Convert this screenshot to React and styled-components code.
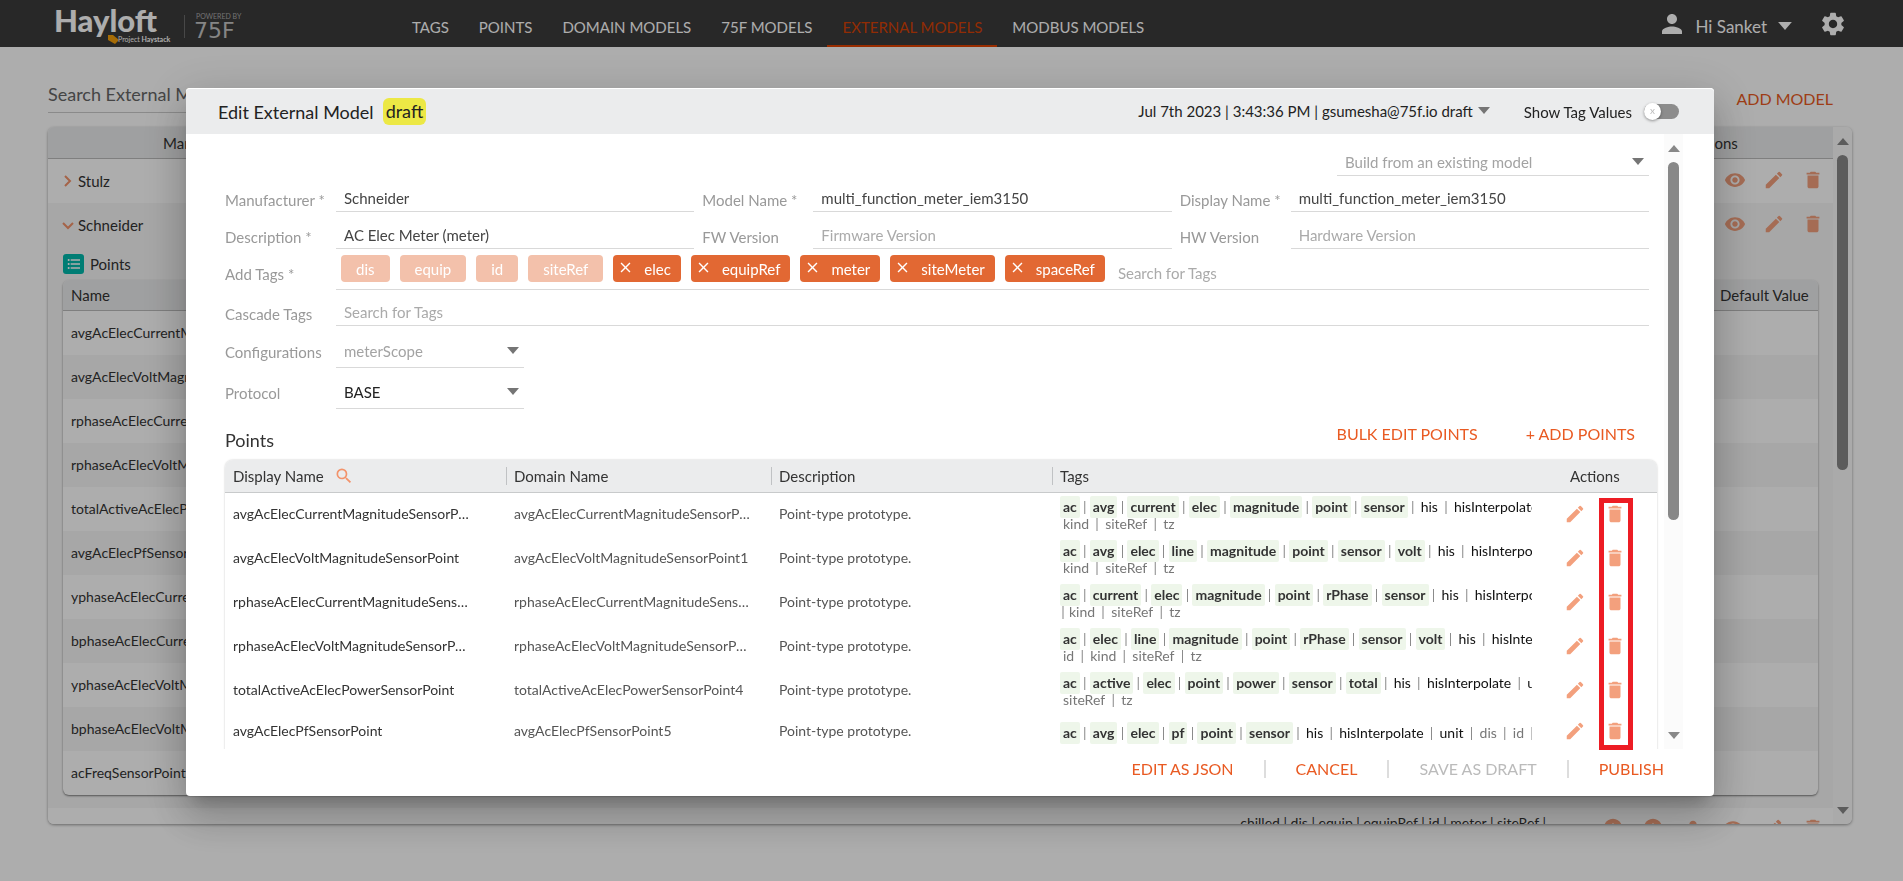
import React from "react";
import styled, { createGlobalStyle, css } from "styled-components";
import {
  MdClose,
  MdDelete,
  MdEdit,
  MdFormatListBulleted,
  MdInfo,
  MdPerson,
  MdSearch,
  MdSettings,
  MdVisibility,
} from "react-icons/md";

const navItems = [
  "TAGS",
  "POINTS",
  "DOMAIN MODELS",
  "75F MODELS",
  "EXTERNAL MODELS",
  "MODBUS MODELS",
];

const modelPoints = [
  "avgAcElecCurrentMagnitudeSensorPoint",
  "avgAcElecVoltMagnitudeSensorPoint",
  "rphaseAcElecCurrentMagnitudeSensorPoint",
  "rphaseAcElecVoltMagnitudeSensorPoint",
  "totalActiveAcElecPowerSensorPoint",
  "avgAcElecPfSensorPoint",
  "yphaseAcElecCurrentMagnitudeSensorPoint",
  "bphaseAcElecCurrentMagnitudeSensorPoint",
  "yphaseAcElecVoltMagnitudeSensorPoint",
  "bphaseAcElecVoltMagnitudeSensorPoint",
  "acFreqSensorPoint",
];

const fixedTags = ["dis", "equip", "id", "siteRef"];
const addedTags = ["elec", "equipRef", "meter", "siteMeter", "spaceRef"];

const points = [
  {
    name: "avgAcElecCurrentMagnitudeSensorPoint",
    marked: ["ac", "avg", "current", "elec", "magnitude", "point", "sensor"],
    plain: ["his", "hisInterpolate", "unit"],
    second: ["kind", "siteRef", "tz"],
  },
  {
    name: "avgAcElecVoltMagnitudeSensorPoint",
    marked: ["ac", "avg", "elec", "line", "magnitude", "point", "sensor", "volt"],
    plain: ["his", "hisInterpolate", "unit"],
    second: ["kind", "siteRef", "tz"],
  },
  {
    name: "rphaseAcElecCurrentMagnitudeSensorPoint",
    marked: ["ac", "current", "elec", "magnitude", "point", "rPhase", "sensor"],
    plain: ["his", "hisInterpolate", "unit"],
    second: ["kind", "siteRef", "tz"],
    continued: true,
  },
  {
    name: "rphaseAcElecVoltMagnitudeSensorPoint",
    marked: ["ac", "elec", "line", "magnitude", "point", "rPhase", "sensor", "volt"],
    plain: ["his", "hisInterpolate", "unit"],
    second: ["id", "kind", "siteRef", "tz"],
  },
  {
    name: "totalActiveAcElecPowerSensorPoint",
    marked: ["ac", "active", "elec", "point", "power", "sensor", "total"],
    plain: ["his", "hisInterpolate", "unit"],
    second: ["siteRef", "tz"],
  },
  {
    name: "avgAcElecPfSensorPoint",
    marked: ["ac", "avg", "elec", "pf", "point", "sensor"],
    plain: ["his", "hisInterpolate", "unit"],
    muted: ["dis", "id", "kind"],
    second: [],
  },
];

const Logo = () => (
  <LogoSvg width="190" height="47" viewBox="0 0 190 47" role="img" aria-label="Hayloft powered by 75F">
    <text x="-2" y="32" fontSize="31" fontWeight="900" fill="#fff">
      Hayloft
    </text>
    <path d="M52 35h5l6 5-4 4-7-4z" fill="#f5a009" />
    <text x="62" y="42" fontSize="7" fill="#fff">
      Project <tspan fontWeight="700">Haystack</tspan>
    </text>
    <path d="M128.500 15v23" stroke="#6a6a6a" />
    <text x="140" y="19" fontSize="7" fill="#aaa">
      POWERED BY
    </text>
    <text x="138" y="38" fontSize="22" fill="#c4c4c4" fontFamily="DejaVu Sans, sans-serif">
      75F
    </text>
  </LogoSvg>
);

const Caret = ({ size = 12, color = "#757575", up }) => (
  <CaretSvg width={size} height={size / 2 + 1} viewBox="0 0 12 7">
    <path d={up ? "M0 7L6 0l6 7z" : "M0 0h12L6 7z"} fill={color} />
  </CaretSvg>
);

const Scrollbar = ({ size }) => (
  <ScrollTrack>
    <Caret up color="#888" />
    <ScrollRail>
      <ScrollThumb $size={size} />
    </ScrollRail>
    <Caret color="#888" />
  </ScrollTrack>
);

const TagList = ({ items, marked, muted }) =>
  items.map((tag, index) => (
    <React.Fragment key={tag}>
      {index > 0 && <Bar>|</Bar>}
      <Tag $marked={marked} $muted={muted}>
        {tag}
      </Tag>
    </React.Fragment>
  ));

const Field = ({ id, label, value, placeholder }) => (
  <FieldBox>
    <Label htmlFor={id}>{label}</Label>
    <TextInput id={id} defaultValue={value} placeholder={placeholder} />
  </FieldBox>
);

const ModelsPage = () => (
  <Main>
    <Toolbar>
      <SearchInput aria-label="Search External Models" placeholder="Search External Models" />
      <Pager>
        <span>Results per page</span>
        <PageSize>20</PageSize>
        <span>1 - 20 of 151</span>
      </Pager>
      <LinkButton>ADD MODEL</LinkButton>
    </Toolbar>
    <Panel>
      <PanelContent>
        <ModelTable>
          <thead>
            <tr>
              <th>Manufacturer</th>
              <th>Model</th>
              <th>Tags</th>
              <th>Actions</th>
            </tr>
          </thead>
          <tbody>
            {["Stulz", "Schneider"].map((name, index) => (
              <ModelRow key={name} $shaded={index === 1}>
                <td colSpan="3">
                  <Expander>
                    <svg width="14" height="14" viewBox="0 0 14 14" fill="none" stroke="#f3936b" strokeWidth="2">
                      <path d={index === 1 ? "M1 5l5 5 5-5" : "M3 2l5 5-5 5"} />
                    </svg>
                    {name}
                  </Expander>
                </td>
                <td>
                  <RowActions $gap={17}>
                    <IconButton aria-label="View"><MdVisibility size={22} /></IconButton>
                    <IconButton aria-label="Edit"><MdEdit size={22} /></IconButton>
                    <IconButton aria-label="Delete"><MdDelete size={22} /></IconButton>
                  </RowActions>
                </td>
              </ModelRow>
            ))}
          </tbody>
        </ModelTable>
        <Nested>
          <NestedTitle>
            <ListBadge>
              <MdFormatListBulleted size={16} />
            </ListBadge>
            Points
          </NestedTitle>
          <NestedTable>
            <thead>
              <tr>
                <th>Name</th>
                <th>Default Value</th>
              </tr>
            </thead>
            <tbody>
              {modelPoints.map((name) => (
                <tr key={name}>
                  <td>{name}</td>
                  <td />
                </tr>
              ))}
            </tbody>
          </NestedTable>
        </Nested>
        <NextModel>
          <span>chilled | dis | equip | equipRef | id | meter | siteRef |</span>
          <RowActions $gap={18}>
            <IconButton aria-label="Info"><MdInfo size={22} /></IconButton>
            <IconButton aria-label="Details"><MdInfo size={22} /></IconButton>
            <IconButton aria-label="User"><MdPerson size={22} /></IconButton>
            <IconButton aria-label="View"><MdVisibility size={22} /></IconButton>
            <IconButton aria-label="Edit"><MdEdit size={22} /></IconButton>
            <IconButton aria-label="Delete"><MdDelete size={22} /></IconButton>
          </RowActions>
        </NextModel>
      </PanelContent>
      <Scrollbar size={49} />
    </Panel>
  </Main>
);

const EditDialog = () => (
  <Dialog role="dialog" aria-label="Edit External Model">
    <DialogHeader>
      <Title>Edit External Model</Title>
      <DraftBadge>draft</DraftBadge>
      <VersionButton>
        Jul 7th 2023 | 3:43:36 PM | gsumesha@75f.io draft
        <Caret />
      </VersionButton>
      <SwitchLabel>
        Show Tag Values
        <SwitchInput type="checkbox" />
        <SwitchTrack>
          <SwitchKnob>x</SwitchKnob>
        </SwitchTrack>
      </SwitchLabel>
    </DialogHeader>

    <DialogBody>
      <DialogContent>
        <Form>
          <BuildRow>
            <SelectBox $width={312} $height={28}>
              <Select aria-label="Build from an existing model" $muted>
                <option>Build from an existing model</option>
              </Select>
              <Caret />
            </SelectBox>
          </BuildRow>
          <FieldRow $height={36}>
            <Field id="manufacturer" label="Manufacturer *" value="Schneider" />
            <Field id="modelName" label="Model Name *" value="multi_function_meter_iem3150" />
            <Field id="displayName" label="Display Name *" value="multi_function_meter_iem3150" />
          </FieldRow>
          <FieldRow $height={37}>
            <Field id="description" label="Description *" value="AC Elec Meter (meter)" />
            <Field id="firmware" label="FW Version" placeholder="Firmware Version" />
            <Field id="hardware" label="HW Version" placeholder="Hardware Version" />
          </FieldRow>
          <FormRow $height={41}>
            <Label htmlFor="tags" $raised>Add Tags *</Label>
            <ChipField>
              {fixedTags.map((tag) => (
                <Chip key={tag} $fixed>{tag}</Chip>
              ))}
              {addedTags.map((tag) => (
                <Chip key={tag}>
                  <ChipRemove aria-label={`Remove ${tag}`}>
                    <MdClose size={17} />
                  </ChipRemove>
                  {tag}
                </Chip>
              ))}
              <ChipInput id="tags" placeholder="Search for Tags" />
            </ChipField>
          </FormRow>
          <FormRow $height={36}>
            <Label htmlFor="cascade">Cascade Tags</Label>
            <TextInput id="cascade" placeholder="Search for Tags" />
          </FormRow>
          <FormRow $height={42}>
            <Label htmlFor="config" $raised>Configurations</Label>
            <SelectBox $width={188} $height={34}>
              <Select id="config" $muted>
                <option>meterScope</option>
              </Select>
              <Caret />
            </SelectBox>
          </FormRow>
          <FormRow $height={41}>
            <Label htmlFor="protocol" $raised>Protocol</Label>
            <SelectBox $width={188} $height={34}>
              <Select id="protocol">
                <option>BASE</option>
              </Select>
              <Caret />
            </SelectBox>
          </FormRow>
        </Form>

        <PointsBar>
          <PointsTitle>Points</PointsTitle>
          <LinkButton>BULK EDIT POINTS</LinkButton>
          <LinkButton>+ ADD POINTS</LinkButton>
        </PointsBar>

        <PointsTable>
          <colgroup>
            <NameCol />
            <DomainCol />
            <NameCol />
            <col />
            <ActionsCol />
          </colgroup>
          <thead>
            <tr>
              <HeadCell>
                <HeadText>
                  Display Name
                  <MdSearch size={20} color="#f3936b" />
                </HeadText>
              </HeadCell>
              <HeadCell $divided><HeadText>Domain Name</HeadText></HeadCell>
              <HeadCell $divided><HeadText>Description</HeadText></HeadCell>
              <HeadCell $divided><HeadText>Tags</HeadText></HeadCell>
              <HeadCell><HeadText $indent>Actions</HeadText></HeadCell>
            </tr>
          </thead>
          <tbody>
            {points.map((point, index) => (
              <tr key={point.name}>
                <Cell $dark><Ellipsis>{point.name}</Ellipsis></Cell>
                <Cell><Ellipsis>{`${point.name}${index}`}</Ellipsis></Cell>
                <Cell>Point-type prototype.</Cell>
                <TagCell>
                  <TagLine>
                    <TagList items={point.marked} marked />
                    <Bar>|</Bar>
                    <TagList items={point.plain} />
                    {point.muted && <Bar>|</Bar>}
                    {point.muted && <TagList items={point.muted} muted />}
                  </TagLine>
                  {point.second.length > 0 && (
                    <SecondLine>
                      {point.continued && <Bar $first>|</Bar>}
                      <TagList items={point.second} muted />
                    </SecondLine>
                  )}
                </TagCell>
                <td>
                  <PointActions $gap={18}>
                    <IconButton aria-label="Edit point"><MdEdit size={22} /></IconButton>
                    <IconButton aria-label="Delete point"><MdDelete size={22} /></IconButton>
                  </PointActions>
                </td>
              </tr>
            ))}
          </tbody>
        </PointsTable>
      </DialogContent>
      <Scrollbar size={64} />
    </DialogBody>

    <DialogFooter>
      <FooterButton>EDIT AS JSON</FooterButton>
      <FooterButton>CANCEL</FooterButton>
      <FooterButton disabled>SAVE AS DRAFT</FooterButton>
      <FooterButton>PUBLISH</FooterButton>
    </DialogFooter>
    <Highlight />
  </Dialog>
);

export default function App() {
  return (
    <>
      <GlobalStyle />
      <Page>
        <Header>
          <Logo />
          <Nav>
            {navItems.map((item) => (
              <NavLink key={item} href="#" $active={item === "EXTERNAL MODELS"}>
                {item}
              </NavLink>
            ))}
          </Nav>
          <UserMenu>
            <MdPerson size={30} />
            Hi Sanket
            <Caret size={14} color="#fff" />
          </UserMenu>
          <SettingsButton aria-label="Settings">
            <MdSettings size={28} />
          </SettingsButton>
        </Header>
        <ModelsPage />
      </Page>
      <Backdrop>
        <EditDialog />
      </Backdrop>
    </>
  );
}

const GlobalStyle = createGlobalStyle`
  * {
    box-sizing: border-box;
  }

  body {
    margin: 0;
    background: #fff;
    color: #333;
    font-family: Lato, sans-serif;
    font-size: 15px;
  }

  button,
  input,
  select {
    font: inherit;
    color: inherit;
    border: 0;
    padding: 0;
    margin: 0;
    background: none;
    outline: none;
  }

  table {
    border-spacing: 0;
    table-layout: fixed;
    width: 100%;
  }

  th,
  td {
    padding: 0;
    text-align: left;
    font-weight: 400;
  }
`;

const Page = styled.div`
  display: flex;
  flex-direction: column;
  height: 100vh;
  overflow: hidden;
`;

const Header = styled.header`
  display: flex;
  align-items: stretch;
  flex: none;
  height: 47px;
  padding: 0 56px;
  background: #3b3b3b;
  color: #fff;
`;

const LogoSvg = styled.svg`
  flex: none;
  margin-right: 151px;
  overflow: visible;
`;

const Nav = styled.nav`
  display: flex;
  flex: 1;
`;

const NavLink = styled.a`
  padding: 9px 15px 0;
  border-bottom: 2px solid ${({ $active }) => ($active ? "#e24301" : "transparent")};
  line-height: 36px;
  color: ${({ $active }) => ($active ? "#d64206" : "#fff")};
  text-decoration: none;
  white-space: nowrap;
`;

const UserMenu = styled.button`
  display: flex;
  align-items: center;
  gap: 11px;
  padding-top: 5px;
  font-size: 17px;

  > svg:first-child {
    margin: 0 -2px 4px 0;
  }
`;

const SettingsButton = styled.button`
  display: flex;
  align-items: center;
  margin-left: 27px;
`;

const CaretSvg = styled.svg`
  flex: none;
  pointer-events: none;
`;

const Main = styled.main`
  display: flex;
  flex-direction: column;
  flex: 1;
  min-height: 0;
  padding: 31px 51px 57px 48px;
`;

const Toolbar = styled.div`
  display: flex;
  align-items: flex-start;
  flex: none;
  height: 49px;
  padding-right: 19px;
`;

const SearchInput = styled.input`
  width: 340px;
  height: 35px;
  padding-bottom: 2px;
  border-bottom: 1px solid #ccc;
  font-size: 18px;

  &::placeholder {
    color: #666;
    opacity: 1;
  }
`;

const Pager = styled.div`
  display: flex;
  flex: 1;
  gap: 22px;
  padding: 6px 0 0 29px;

  span:last-child {
    margin-left: 78px;
  }
`;

const PageSize = styled.span`
  color: #e24301;
`;

const LinkButton = styled.button`
  font-size: 16px;
  line-height: 24px;
  color: #e95a22;
  white-space: nowrap;

  ${Toolbar} & {
    margin-top: 9px;
  }
`;

const Panel = styled.section`
  display: flex;
  flex: 1;
  min-height: 0;
  border-radius: 6px;
  box-shadow: 0 1px 3px rgba(0, 0, 0, 0.4);
  overflow: hidden;
`;

const PanelContent = styled.div`
  flex: 1;
  min-width: 0;
  background: #f6f6f6;
`;

const ModelTable = styled.table`
  th {
    height: 32px;
    border-bottom: 1px solid #bbb;
    background: #ebeced;
    text-align: center;
  }

  th:first-child {
    width: 320px;
  }

  th:last-child {
    width: 240px;
  }
`;

const ModelRow = styled.tr`
  height: 44px;
  background: ${({ $shaded }) => ($shaded ? "#f6f6f6" : "#fff")};
`;

const Expander = styled.button`
  display: flex;
  align-items: center;
  gap: 2px;
  padding-left: 14px;
`;

const RowActions = styled.div`
  display: flex;
  justify-content: flex-end;
  gap: ${({ $gap }) => $gap}px;
  padding-right: 9px;

  ${ModelRow} & {
    padding-bottom: 3px;
  }
`;

const PointActions = styled(RowActions)`
  padding: 0 31px 2px 0;
`;

const IconButton = styled.button`
  display: flex;
  color: #f3a07d;
`;

const Nested = styled.div`
  padding: 0 15px 13px;
`;

const NestedTitle = styled.div`
  display: flex;
  align-items: center;
  gap: 6px;
  height: 33px;
`;

const ListBadge = styled.span`
  display: grid;
  place-items: center;
  width: 21px;
  height: 20px;
  border-radius: 3px;
  background: #00b8ac;
  color: #fff;
`;

const NestedTable = styled.table`
  border-radius: 6px;
  box-shadow: 0 1px 2px rgba(0, 0, 0, 0.5);
  background: #fff;
  overflow: hidden;
  font-size: 14px;

  th {
    height: 31px;
    border-bottom: 1px solid #bbb;
    background: #ebeced;
    font-size: 15px;
  }

  th,
  td {
    padding-left: 8px;
  }

  th:last-child {
    width: 106px;
  }

  td {
    height: 44px;
    padding-bottom: 2px;
  }

  tbody tr:nth-child(even) {
    background: #f6f6f6;
  }
`;

const NextModel = styled.div`
  display: flex;
  justify-content: flex-end;
  gap: 56px;
  padding-top: 5px;
  background: #fff;
  font-size: 14px;
  line-height: 20px;

  ${RowActions} {
    padding-top: 4px;
  }
`;

const ScrollTrack = styled.div`
  display: flex;
  flex: none;
  flex-direction: column;
  align-items: center;
  gap: 10px;
  width: 19px;
  padding: 11px 0 10px;
  background: #fbfbfb;
`;

const ScrollRail = styled.div`
  flex: 1;
`;

const ScrollThumb = styled.div`
  width: 11px;
  height: ${({ $size }) => $size}%;
  border-radius: 6px;
  background: #888;
`;

const Backdrop = styled.div`
  position: fixed;
  inset: 0;
  display: flex;
  padding: 88px 189px 85px 186px;
  background: rgba(0, 0, 0, 0.32);
`;

const Dialog = styled.section`
  position: relative;
  display: flex;
  flex: 1;
  flex-direction: column;
  min-width: 0;
  border-radius: 4px;
  background: #fff;
  box-shadow: 0 11px 15px -7px rgba(0, 0, 0, 0.2), 0 24px 38px 3px rgba(0, 0, 0, 0.14),
    0 9px 46px 8px rgba(0, 0, 0, 0.12);
`;

const DialogHeader = styled.header`
  display: flex;
  align-items: center;
  flex: none;
  height: 46px;
  padding: 0 35px 0 32px;
  border-top: 1px solid #fff;
  border-radius: 4px 4px 0 0;
  background: #ebeced;
  color: #222;
`;

const Title = styled.h1`
  margin: 0 9px 0 0;
  font-size: 18px;
  font-weight: 400;
`;

const DraftBadge = styled.span`
  padding: 0 3px;
  border-radius: 6px;
  background: #ece845;
  font-size: 18px;
  line-height: 27px;
`;

const VersionButton = styled.button`
  display: flex;
  align-items: center;
  gap: 5px;
  margin: 0 0 2px auto;
`;

const SwitchLabel = styled.label`
  display: flex;
  align-items: center;
  margin-left: 34px;
`;

const SwitchInput = styled.input`
  width: 0;
  height: 0;
  appearance: none;
`;

const SwitchTrack = styled.span`
  display: flex;
  align-items: center;
  width: 35px;
  height: 15px;
  margin-left: 12px;
  border-radius: 8px;
  background: #8c8c8c;
`;

const SwitchKnob = styled.span`
  width: 17px;
  height: 17px;
  border-radius: 50%;
  background: #fff;
  box-shadow: 0 1px 3px rgba(0, 0, 0, 0.4);
  color: #bbb;
  font-size: 10px;
  line-height: 15px;
  text-align: center;
`;

const DialogBody = styled.div`
  display: flex;
  flex: 1;
  min-height: 0;
  padding: 0 31px 0 39px;
  overflow: hidden;
`;

const DialogContent = styled.div`
  flex: 1;
  min-width: 0;
  padding-right: 7px;
`;

const Form = styled.form`
  padding-right: 8px;
`;

const BuildRow = styled.div`
  display: flex;
  align-items: flex-end;
  justify-content: flex-end;
  height: 42px;
`;

const FieldRow = styled.div`
  display: grid;
  grid-template-columns: repeat(3, 1fr);
  gap: 8px;
  height: ${({ $height }) => $height}px;
`;

const FieldBox = styled.div`
  display: flex;
  align-items: flex-end;
  min-width: 0;
`;

const FormRow = styled.div`
  display: flex;
  align-items: flex-end;
  height: ${({ $height }) => $height}px;
`;

const Label = styled.label`
  flex: none;
  width: 111px;
  line-height: ${({ $raised }) => ($raised ? 32 : 24)}px;
  color: #999;
`;

const TextInput = styled.input`
  flex: 1;
  min-width: 0;
  height: 26px;
  padding: 0 8px 1px;
  border-bottom: 1px solid #d9d9d9;
  color: #444;

  &::placeholder {
    color: #aaa;
    opacity: 1;
  }
`;

const SelectBox = styled.div`
  display: flex;
  align-items: center;
  width: ${({ $width }) => $width}px;
  height: ${({ $height }) => $height}px;
  padding: 0 5px 0 8px;
  border-bottom: 1px solid #d9d9d9;
`;

const Select = styled.select`
  flex: 1;
  appearance: none;
  color: ${({ $muted }) => ($muted ? "#a3a3a3" : "#222")};
`;

const ChipField = styled.div`
  display: flex;
  align-items: center;
  flex: 1;
  gap: 10px;
  height: 35px;
  padding: 0 0 7px 5px;
  border-bottom: 1px solid #d9d9d9;
`;

const Chip = styled.span`
  display: flex;
  align-items: center;
  height: 27px;
  padding: 0 10px 0 4px;
  border-radius: 4px;
  background: #e26833;
  color: #fff;

  ${({ $fixed }) =>
    $fixed &&
    css`
      padding: 0 15px;
      background: #f3c1ab;
    `}
`;

const ChipRemove = styled.button`
  display: flex;
  margin-right: 10px;
  padding-bottom: 3px;
`;

const ChipInput = styled.input`
  flex: 1;
  min-width: 0;
  padding: 9px 0 0 3px;

  &::placeholder {
    color: #aaa;
    opacity: 1;
  }
`;

const PointsBar = styled.div`
  display: flex;
  align-items: flex-start;
  gap: 48px;
  height: 51px;
  padding: 13px 22px 0 0;
`;

const PointsTitle = styled.h2`
  flex: 1;
  margin: 6px 0 0;
  font-size: 18px;
  font-weight: 400;
  line-height: 24px;
`;

const PointsTable = styled.table`
  border-radius: 8px 8px 0 0;
  box-shadow: 0 0 2px rgba(0, 0, 0, 0.25);
  font-size: 14px;

  tbody tr {
    height: 38px;
  }
`;

const NameCol = styled.col`
  width: 281px;
`;

const DomainCol = styled.col`
  width: 265px;
`;

const ActionsCol = styled.col`
  width: 125px;
`;

const HeadCell = styled.th`
  height: 33px;
  border-bottom: 1px solid #c8cacb;
  background: #ebeced;
  font-size: 15px;

  &:first-child {
    border-top-left-radius: 8px;
  }

  &:last-child {
    border-top-right-radius: 8px;
  }

  > div {
    border-left: 1px solid ${({ $divided }) => ($divided ? "#c0c2c4" : "transparent")};
  }
`;

const HeadText = styled.div`
  display: flex;
  align-items: center;
  gap: 10px;
  height: 18px;
  padding-left: ${({ $indent }) => ($indent ? 37 : 7)}px;
`;

const Cell = styled.td`
  padding: 0 0 3px 8px;
  color: ${({ $dark }) => ($dark ? "#333" : "#555")};
`;

const Ellipsis = styled.div`
  max-width: 237px;
  overflow: hidden;
  text-overflow: ellipsis;
  white-space: nowrap;
`;

const TagCell = styled.td`
  padding: 3px 0 2px 8px;
  white-space: nowrap;
`;

const TagLine = styled.div`
  max-width: 472px;
  overflow: hidden;
  line-height: 22px;
`;

const SecondLine = styled.div`
  margin-bottom: 5px;
  line-height: 12px;
`;

const Bar = styled.span`
  display: inline-block;
  width: ${({ $first }) => ($first ? 6 : 10)}px;
  color: #888;
  text-align: center;
`;

const Tag = styled.span`
  display: inline-block;
  padding: 0 3px;
  color: ${({ $muted }) => ($muted ? "#777" : "#111")};

  ${({ $marked }) =>
    $marked &&
    css`
      border-radius: 2px;
      background: #eef6ea;
      color: #333;
      font-weight: 700;
    `}
`;

const DialogFooter = styled.footer`
  display: flex;
  justify-content: flex-end;
  flex: none;
  height: 47px;
  padding: 11px 20px 0 0;
`;

const FooterButton = styled.button`
  height: 18px;
  padding: 0 30px;
  border-left: 2px solid #ddd;
  font-size: 16px;
  line-height: 16px;
  color: #e95a22;

  &:first-child {
    border-left: 0;
  }

  &:disabled {
    color: #bbb;
  }
`;

const Highlight = styled.div`
  position: absolute;
  top: 410px;
  right: 81px;
  bottom: 46px;
  width: 34px;
  border: 5px solid #ed1c24;
  pointer-events: none;
`;
